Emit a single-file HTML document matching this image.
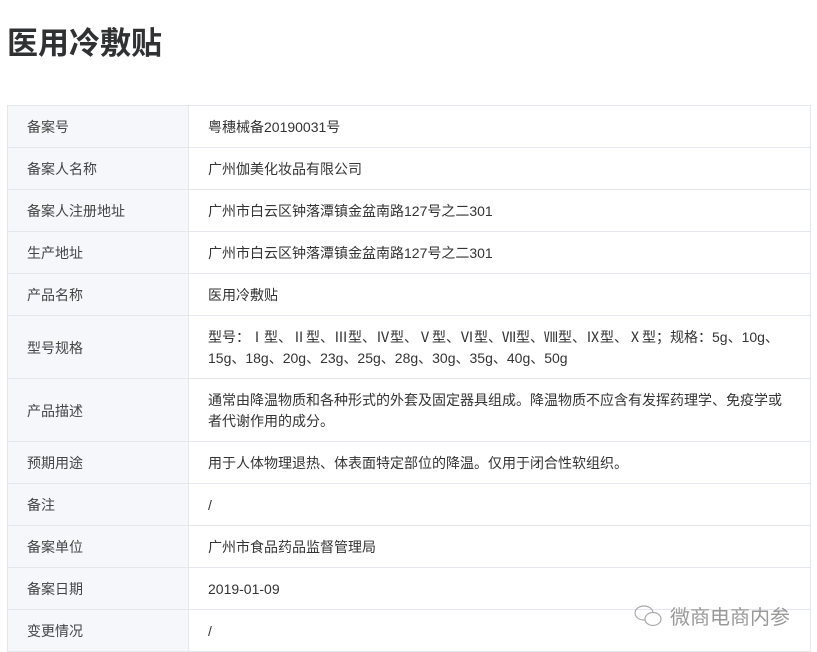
<!DOCTYPE html>
<html><head><meta charset="utf-8"><style>
body{margin:0;background:#fff;width:817px;height:651px;overflow:hidden;font-family:"Liberation Sans","Noto Sans CJK SC",sans-serif;color:#333;position:relative}
h1{position:absolute;left:7px;top:22px;margin:0;font-size:31px;font-weight:bold;color:#303133;line-height:44px}
table{position:absolute;left:7px;top:105px;width:804px;border-collapse:collapse;font-size:14px}
td{border:1px solid #e4e7ed;padding:2px 19px 0;height:39px;line-height:21px;color:#333}
td.l{width:142px;background:#f5f7fa;color:#444}
tr.d td{height:60px}
.wm{position:absolute;top:601px;font-size:20px;color:#999;text-shadow:0 0 1px #fff}
</style></head><body>
<h1>医用冷敷贴</h1>
<table>
<tr><td class="l">备案号</td><td>粤穗械备20190031号</td></tr>
<tr><td class="l">备案人名称</td><td>广州伽美化妆品有限公司</td></tr>
<tr><td class="l">备案人注册地址</td><td>广州市白云区钟落潭镇金盆南路127号之二301</td></tr>
<tr><td class="l">生产地址</td><td>广州市白云区钟落潭镇金盆南路127号之二301</td></tr>
<tr><td class="l">产品名称</td><td>医用冷敷贴</td></tr>
<tr class="d"><td class="l">型号规格</td><td>型号：Ⅰ型、Ⅱ型、Ⅲ型、Ⅳ型、Ⅴ型、Ⅵ型、Ⅶ型、Ⅷ型、Ⅸ型、Ⅹ型；规格：5g、10g、15g、18g、20g、23g、25g、28g、30g、35g、40g、50g</td></tr>
<tr class="d"><td class="l">产品描述</td><td>通常由降温物质和各种形式的外套及固定器具组成。降温物质不应含有发挥药理学、免疫学或者代谢作用的成分。</td></tr>
<tr><td class="l">预期用途</td><td>用于人体物理退热、体表面特定部位的降温。仅用于闭合性软组织。</td></tr>
<tr><td class="l">备注</td><td>/</td></tr>
<tr><td class="l">备案单位</td><td>广州市食品药品监督管理局</td></tr>
<tr><td class="l">备案日期</td><td>2019-01-09</td></tr>
<tr><td class="l">变更情况</td><td>/</td></tr>
</table>
<svg style="position:absolute;left:633px;top:603px" width="32" height="28" viewBox="0 0 32 28" fill="none" stroke="#aaa" stroke-width="1.2"><ellipse cx="11" cy="10" rx="9" ry="7"/><ellipse cx="20" cy="16" rx="8" ry="6.5" fill="#fff"/></svg>
<div class="wm" style="left:670px">微商电商内参</div>
</body></html>
